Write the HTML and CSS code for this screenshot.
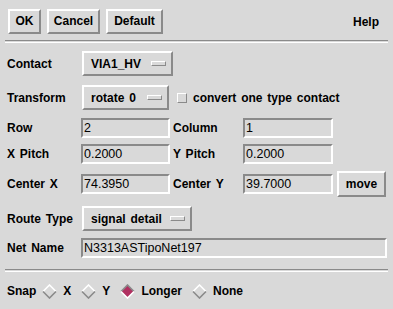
FILE: index.html
```html
<!DOCTYPE html>
<html>
<head>
<meta charset="utf-8">
<link rel="stylesheet" href="styles.css">
</head>
<body>
<div class="dialog">
  <div class="top">
    <div class="btns">
      <span class="btn b-ok">OK</span>
      <span class="btn b-cancel">Cancel</span>
      <span class="btn b-default">Default</span>
    </div>
    <span class="help">Help</span>
  </div>
  <div class="sep"></div>
  <div class="form">
    <div class="row r-contact">
      <span class="lbl">Contact</span>
      <span class="menu m-contact">VIA1_HV<i class="ind"></i></span>
    </div>
    <div class="row r-transform">
      <span class="lbl">Transform</span>
      <span class="menu m-rotate">rotate 0<i class="ind"></i></span>
      <span class="check"></span>
      <span class="checktext">convert one type contact</span>
    </div>
    <div class="row r-row">
      <span class="lbl">Row</span>
      <span class="field f-left">2</span>
      <span class="lbl2">Column</span>
      <span class="field f-right">1</span>
    </div>
    <div class="row r-pitch">
      <span class="lbl">X Pitch</span>
      <span class="field f-left">0.2000</span>
      <span class="lbl2">Y Pitch</span>
      <span class="field f-right">0.2000</span>
    </div>
    <div class="row r-center">
      <span class="lbl">Center X</span>
      <span class="field f-left">74.3950</span>
      <span class="lbl2">Center Y</span>
      <span class="field f-right">39.7000</span>
      <span class="btn b-move">move</span>
    </div>
    <div class="row r-route">
      <span class="lbl">Route Type</span>
      <span class="menu m-route">signal detail<i class="ind"></i></span>
    </div>
    <div class="row r-net">
      <span class="lbl">Net Name</span>
      <span class="field f-net">N3313ASTipoNet197</span>
    </div>
  </div>
  <div class="sep sep2"></div>
  <div class="snap">
    <span class="snaplbl">Snap</span>
    <svg class="dia" width="15" height="15" viewBox="0 0 15 15"><polygon points="7.5,1 14,7.5 7.5,14 1,7.5" fill="#d9d9d9"/><polyline points="1,7.5 7.5,1 14,7.5" fill="none" stroke="#ffffff" stroke-width="1.6"/><polyline points="1,7.5 7.5,14 14,7.5" fill="none" stroke="#8a8a8a" stroke-width="1.6"/></svg>
    <span class="opt">X</span>
    <svg class="dia" width="15" height="15" viewBox="0 0 15 15"><polygon points="7.5,1 14,7.5 7.5,14 1,7.5" fill="#d9d9d9"/><polyline points="1,7.5 7.5,1 14,7.5" fill="none" stroke="#ffffff" stroke-width="1.6"/><polyline points="1,7.5 7.5,14 14,7.5" fill="none" stroke="#8a8a8a" stroke-width="1.6"/></svg>
    <span class="opt">Y</span>
    <svg class="dia" width="15" height="15" viewBox="0 0 15 15"><polygon points="7.5,1 14,7.5 7.5,14 1,7.5" fill="#b03060"/><polyline points="1,7.5 7.5,1 14,7.5" fill="none" stroke="#8a8a8a" stroke-width="1.6"/><polyline points="1,7.5 7.5,14 14,7.5" fill="none" stroke="#ffffff" stroke-width="1.6"/></svg>
    <span class="opt">Longer</span>
    <svg class="dia" width="15" height="15" viewBox="0 0 15 15"><polygon points="7.5,1 14,7.5 7.5,14 1,7.5" fill="#d9d9d9"/><polyline points="1,7.5 7.5,1 14,7.5" fill="none" stroke="#ffffff" stroke-width="1.6"/><polyline points="1,7.5 7.5,14 14,7.5" fill="none" stroke="#8a8a8a" stroke-width="1.6"/></svg>
    <span class="opt">None</span>
  </div>
</div>
</body>
</html>
```
FILE: styles.css
```css
* { box-sizing: border-box; }
html, body {
  margin: 0;
  padding: 0;
  background: #d9d9d9;
}
body {
  width: 393px;
  height: 309px;
  overflow: hidden;
  font-family: "Liberation Sans", Arial, sans-serif;
  font-weight: bold;
  font-size: 12px;
  word-spacing: 1.5px;
  color: #000;
}
.top {
  display: flex;
  align-items: center;
  justify-content: space-between;
  height: 40px;
  padding: 2px 14px 0 8px;
}
.btns {
  display: flex;
  gap: 6px;
}
.btn {
  display: inline-flex;
  align-items: center;
  justify-content: center;
  height: 25px;
  border: 2px solid;
  border-color: #ffffff #8a8a8a #8a8a8a #ffffff;
  background: #d9d9d9;
}
.b-ok { width: 33px; }
.b-cancel { width: 53px; }
.b-default { width: 57px; }
.help { padding-top: 1px; }
.sep {
  height: 3px;
  margin: 0 5px 0 5px;
  border-top: 1px solid #8a8a8a;
  border-bottom: 1px solid #ffffff;
}
.form {
  display: flex;
  flex-direction: column;
  padding: 8px 6px 0 7px;
}
.row {
  display: flex;
  align-items: center;
}
.lbl { width: 74px; flex: none; }
.lbl2 { width: 73px; flex: none; padding-left: 3px; }
.r-contact { height: 25px; }
.r-transform { height: 25px; margin-top: 9px; }
.r-row { height: 22px; margin-top: 7px; }
.r-pitch { height: 22px; margin-top: 4px; }
.r-center { height: 26px; margin-top: 6px; }
.r-route { height: 25px; margin-top: 9px; }
.r-net { height: 22px; margin-top: 6px; }
.menu {
  position: relative;
  display: inline-flex;
  align-items: center;
  height: 25px;
  padding-left: 7px;
  border: 2px solid;
  border-color: #ffffff #8a8a8a #8a8a8a #ffffff;
  margin-left: 1px;
}
.m-contact { width: 91px; }
.m-rotate { width: 87px; }
.m-route { width: 110px; }
.ind {
  position: absolute;
  right: 5px;
  top: 8px;
  width: 15px;
  height: 5px;
  border: 1px solid;
  border-color: #ffffff #8a8a8a #8a8a8a #ffffff;
}
.check {
  width: 10px;
  height: 10px;
  margin-left: 8px;
  border: 1px solid;
  border-color: #ffffff #8a8a8a #8a8a8a #ffffff;
}
.checktext { margin-left: 6px; }
.field {
  display: inline-flex;
  align-items: center;
  height: 20px;
  padding-left: 1px;
  border: 2px solid;
  border-color: #8a8a8a #ffffff #ffffff #8a8a8a;
  font-weight: normal;
  font-size: 12.5px;
  word-spacing: 0;
}
.f-left { width: 89px; }
.f-right { width: 90px; }
.f-net { width: 306px; }
.b-move {
  width: 49px;
  height: 26px;
  margin-left: 4px;
}
.sep2 { margin-top: 10px; }
.snap {
  display: flex;
  align-items: center;
  height: 20px;
  margin-top: 9px;
  padding-left: 7px;
}
.dia { margin: 0 6px 0 6px; flex: none; }
.opt { margin-right: 4px; }
```
